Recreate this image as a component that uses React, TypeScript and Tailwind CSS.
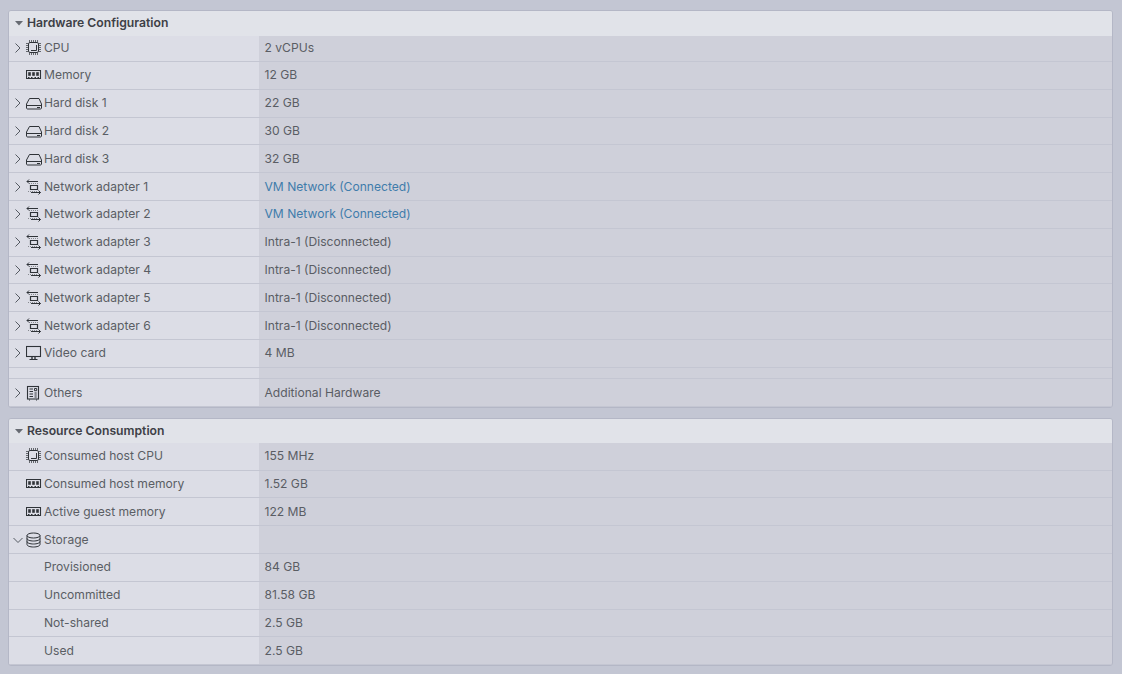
import React from "react";

type Kind = "cpu" | "mem" | "disk" | "net" | "video" | "others" | "storage";

const Icon = ({ kind }: { kind: Kind }) => {
    const common = {
        width: 16,
        height: 16,
        viewBox: "0 0 16 16",
        fill: "none",
        stroke: "#2f3338",
        strokeWidth: 1,
        className: "shrink-0",
    };
    switch (kind) {
        case "cpu":
            return (
                <svg {...common}>
                    <rect x="2.5" y="2.5" width="10" height="10" rx="1.5" />
                    <path d="M5 10.5H10.5V5" />
                    <path
                        d="M3.5 0V2M5.5 0V2M7.5 0V2M9.5 0V2M11.5 0V2M3.5 13V15M5.5 13V15M7.5 13V15M9.5 13V15M11.5 13V15M0 3.5H2M0 5.5H2M0 7.5H2M0 9.5H2M0 11.5H2M13 3.5H15M13 5.5H15M13 7.5H15M13 9.5H15M13 11.5H15"
                        strokeWidth="0.7"
                    />
                </svg>
            );
        case "mem":
            return (
                <svg {...common}>
                    <path d="M.5 3.5H14.5V11.5H.5Z" strokeWidth="1.1" />
                    <path d="M2.5 5.5H4.5V8.5H2.5ZM6.5 5.5H8.5V8.5H6.5ZM10.5 5.5H12.5V8.5H10.5Z" fill="#2f3338" strokeWidth="0.6" />
                    <path d="M2 10.5H3.5M5 10.5H6.5M8.5 10.5H10M11.5 10.5H13" />
                </svg>
            );
        case "disk":
            return (
                <svg {...common} width={17} height={16} viewBox="0 0 17 16">
                    <path d="M3.5 3.5H13L15.5 9V13C15.5 13.5 15 14 14.5 14H1.5C1 14 .5 13.5 .5 13V9Z" />
                    <path d="M.5 10.5H15.5" />
                    <path d="M11 12.5H14" />
                </svg>
            );
        case "net":
            return (
                <svg {...common}>
                    <path d="M1 2.5H12M3 .5L1 2.5L3 4.5" />
                    <path d="M3 4.5H13" strokeWidth="0.7" strokeDasharray="1 1" opacity="0.7" />
                    <path d="M4.5 6.5H11.5V10.5H4.5Z" strokeWidth="1.2" />
                    <path d="M2 12.5H12" strokeWidth="0.7" strokeDasharray="1 1" opacity="0.7" />
                    <path d="M5 13.5H14.5M12.5 11.5L14.5 13.5L12.5 15.5" />
                </svg>
            );
        case "video":
            return (
                <svg {...common}>
                    <rect x=".5" y="1.5" width="14" height="10" strokeWidth="1.1" />
                    <path d="M6 12V14M9 12V14" strokeWidth="1.4" />
                    <path d="M3.5 14.5H11.5" strokeWidth="1.2" />
                </svg>
            );
        case "others":
            return (
                <svg {...common}>
                    <rect x="1.5" y="1.5" width="11" height="12.5" strokeWidth="1.1" />
                    <path d="M3.5 4H7M3.5 6.5H7M3.5 9H7M3.5 11.5H7" strokeWidth="1.1" />
                    <path d="M8.5 3.5H10.7V5.7H8.5ZM8.5 8H10.7M8.5 10H10.7M8.5 12H10.7" strokeWidth="1" />
                    <path d="M3.5 14.5V15.5M10.5 14.5V15.5" />
                </svg>
            );
        case "storage":
            return (
                <svg {...common}>
                    <ellipse cx="7.5" cy="3.5" rx="6.5" ry="2.5" />
                    <path d="M1 3.5V12.5C1 14 4 15 7.5 15S14 14 14 12.5V3.5" />
                    <path d="M1 6.5C1 8 4 9 7.5 9S14 8 14 6.5M1 9.5C1 11 4 12 7.5 12S14 11 14 9.5" />
                </svg>
            );
    }
};

const Chevron = ({ open }: { open?: boolean }) => (
    <svg width="10" height="10" viewBox="0 0 10 10" fill="none" stroke="#555a62" strokeWidth="1" className="shrink-0">
        {open ? <path d="M.5 3L5 7.5L9.5 3" /> : <path d="M2.5 .5L7 5L2.5 9.5" />}
    </svg>
);

interface RowProps {
    label?: string;
    value?: string;
    icon?: Kind;
    chevron?: "closed" | "open";
    link?: boolean;
    h: string;
}

const Row = ({ label, value, icon, chevron, link, h }: RowProps) => (
    <div className={`flex ${h} border-b border-[#c4c6d2]`}>
        <div className="w-[250px] shrink-0 flex items-center bg-[#dcdde6] pl-[3px]">
            <div className="w-[12px] shrink-0 flex justify-center">
                {chevron && <Chevron open={chevron === "open"} />}
            </div>
            <div className="w-[20px] shrink-0 ml-[2px] flex">{icon && <Icon kind={icon} />}</div>
            {label && <span className="ml-[-2px] text-[#5a5d64]">{label}</span>}
        </div>
        <div className={`flex-1 flex items-center pl-[5.5px] ${link ? "text-[#3f7cab]" : "text-[#5a5d64]"}`}>
            {value}
        </div>
    </div>
);

const Panel = ({ title, children }: { title: string; children: React.ReactNode }) => (
    <div className="bg-[#cfd0da] border border-[#b4b7c6] rounded-[3px] overflow-hidden">
        <div className="h-[24.5px] bg-[#e1e3e9] flex items-center pl-[6px]">
            <svg width="8" height="5" viewBox="0 0 8 5" className="shrink-0">
                <path d="M0 0H8L4 4.5Z" fill="#666a72" />
            </svg>
            <span className="ml-[4px] text-[12.2px] font-semibold text-[#3d4046]">{title}</span>
        </div>
        {children}
    </div>
);

const hardware: Omit<RowProps, "h">[] = [
    { label: "Hard disk 1", value: "22 GB", icon: "disk", chevron: "closed" },
    { label: "Hard disk 2", value: "30 GB", icon: "disk", chevron: "closed" },
    { label: "Hard disk 3", value: "32 GB", icon: "disk", chevron: "closed" },
    { label: "Network adapter 1", value: "VM Network (Connected)", icon: "net", chevron: "closed", link: true },
    { label: "Network adapter 2", value: "VM Network (Connected)", icon: "net", chevron: "closed", link: true },
    { label: "Network adapter 3", value: "Intra-1 (Disconnected)", icon: "net", chevron: "closed" },
    { label: "Network adapter 4", value: "Intra-1 (Disconnected)", icon: "net", chevron: "closed" },
    { label: "Network adapter 5", value: "Intra-1 (Disconnected)", icon: "net", chevron: "closed" },
    { label: "Network adapter 6", value: "Intra-1 (Disconnected)", icon: "net", chevron: "closed" },
    { label: "Video card", value: "4 MB", icon: "video", chevron: "closed" },
];

const resources: Omit<RowProps, "h">[] = [
    { label: "Consumed host memory", value: "1.52 GB", icon: "mem" },
    { label: "Active guest memory", value: "122 MB", icon: "mem" },
    { label: "Storage", icon: "storage", chevron: "open" },
    { label: "Provisioned", value: "84 GB" },
    { label: "Uncommitted", value: "81.58 GB" },
    { label: "Not-shared", value: "2.5 GB" },
    { label: "Used", value: "2.5 GB" },
];

export default function App() {
    return (
        <div
            className="h-[674px] bg-[#c3c6d3] pl-[8px] pr-[9px] pt-[10px] flex flex-col gap-[9.5px] text-[12.1px] leading-[18px] overflow-hidden"
            style={{ fontFamily: "Inter, 'Liberation Sans', sans-serif" }}
        >
            <Panel title="Hardware Configuration">
                <Row label="CPU" value="2 vCPUs" icon="cpu" chevron="closed" h="h-[26.4px]" />
                <Row label="Memory" value="12 GB" icon="mem" h="h-[27.9px]" />
                {hardware.map((row) => (
                    <Row key={row.label} {...row} h="h-[27.8px]" />
                ))}
                <Row h="h-[11px]" />
                <Row label="Others" value="Additional Hardware" icon="others" chevron="closed" h="h-[28.5px]" />
            </Panel>
            <Panel title="Resource Consumption">
                <Row label="Consumed host CPU" value="155 MHz" icon="cpu" h="h-[27.4px]" />
                {resources.map((row) => (
                    <Row key={row.label} {...row} h="h-[27.8px]" />
                ))}
            </Panel>
        </div>
    );
}
